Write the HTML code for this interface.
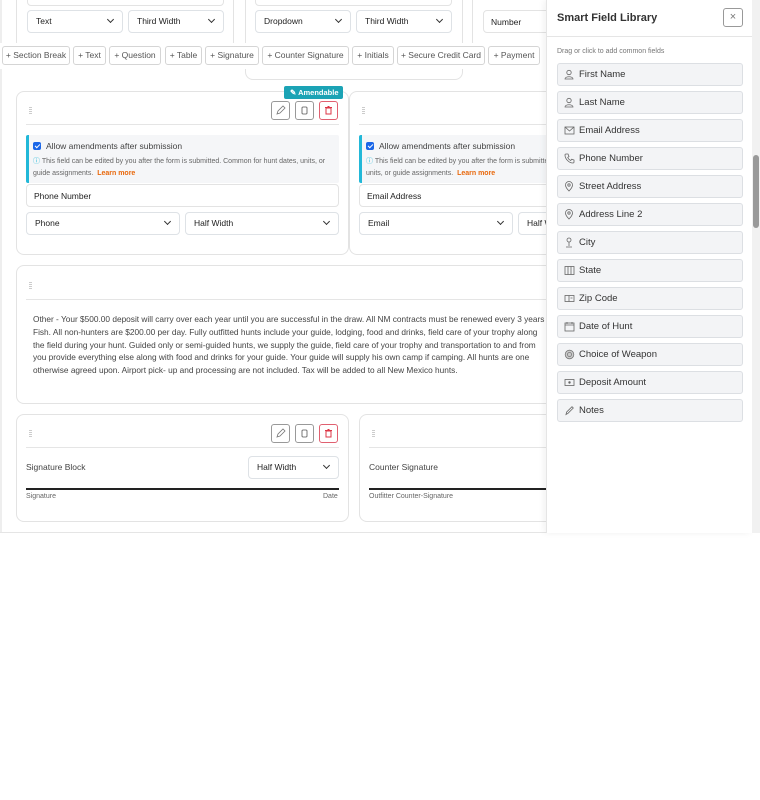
<!DOCTYPE html>
<html><head><style>
*{box-sizing:border-box;margin:0;padding:0}
body{width:760px;height:800px;background:#fff;font-family:"Liberation Sans",sans-serif;color:#333;position:relative;overflow:hidden}
.a{position:absolute}
.main{position:absolute;left:0;top:0;width:546px;height:533px;background:#fff;border-bottom:1px solid #e5e5e5;overflow:hidden}
.card{position:absolute;background:#fff;border:1px solid #e3e3e3;border-radius:8px}
.sel{position:absolute;height:23px;border:1px solid #dee2e6;border-radius:4px;font-size:8.5px;line-height:21px;padding-left:8px;background:#fff;color:#222}
.sel:after{content:"";position:absolute;right:9px;top:6px;width:4px;height:4px;border-right:1px solid #333;border-bottom:1px solid #333;transform:rotate(45deg)}
.inp{position:absolute;height:24px;border:1px solid #e3e3e3;border-radius:4px;font-size:8.5px;line-height:22px;padding-left:7px;background:#fff;color:#222}
.tb{position:absolute;top:46px;height:19px;border:1px solid #d5d5d5;border-radius:3px;font-size:8.5px;line-height:17px;text-align:center;background:#fff;color:#555;white-space:nowrap;overflow:hidden}
.grip{position:absolute;width:3px;height:7px;background:repeating-linear-gradient(#ccc 0 1px,transparent 1px 2px)}
.hr{position:absolute;height:1px;background:#e5e5e5}
.ib{position:absolute;width:19px;height:19px;border:1px solid #999;border-radius:3px;background:#fff}
.ib.r{border-color:#e06070}
.amend{position:absolute;background:#f5f6f8;border-left:3px solid #22b8d8;border-radius:2px}
.chk{position:absolute;width:8px;height:8px;background:#1a66e8;border-radius:2px}
.chk:after{content:"";position:absolute;left:2.5px;top:1px;width:2px;height:4px;border-right:1px solid #fff;border-bottom:1px solid #fff;transform:rotate(45deg)}
.t85{font-size:8.5px;color:#444}
.small{font-size:7px;color:#666;line-height:12px}
.lm{color:#e8680c;font-weight:bold}
.panel{position:absolute;left:546px;top:0;width:206px;height:533px;background:#fff;border-left:1px solid #e5e5e5;box-shadow:-2px 0 6px rgba(0,0,0,.06)}
.pi{position:absolute;left:10px;width:186px;height:23px;background:#f3f4f6;border:1px solid #dcdfe3;border-radius:3px;font-size:9.5px;line-height:21px;padding-left:21px;color:#333}
.pi svg{position:absolute;left:6px;top:5px}
</style></head><body>
<div class="main">
  <div class="a" style="left:0;top:0;width:2px;height:533px;background:#eee"></div>
  <div class="card" style="left:16px;top:-20px;width:218px;height:70px"></div>
  <div class="card" style="left:245px;top:-20px;width:218px;height:100px"></div>
  <div class="card" style="left:472px;top:-20px;width:100px;height:70px"></div>
  <div class="inp" style="left:27px;top:-18px;width:197px"></div>
  <div class="inp" style="left:255px;top:-18px;width:197px"></div>
  <div class="sel" style="left:27px;top:10px;width:96px">Text</div>
  <div class="sel" style="left:128px;top:10px;width:96px">Third Width</div>
  <div class="sel" style="left:255px;top:10px;width:96px">Dropdown</div>
  <div class="sel" style="left:356px;top:10px;width:96px">Third Width</div>
  <div class="inp" style="left:483px;top:10px;width:80px;height:23px">Number</div>
  <div class="a" style="left:0;top:43px;width:546px;height:26px;background:#fff"></div>
  <div class="tb" style="left:2px;width:68px">+ Section Break</div>
  <div class="tb" style="left:73px;width:33px">+ Text</div>
  <div class="tb" style="left:109px;width:52px">+ Question</div>
  <div class="tb" style="left:165px;width:37px">+ Table</div>
  <div class="tb" style="left:205px;width:54px">+ Signature</div>
  <div class="tb" style="left:262px;width:87px">+ Counter Signature</div>
  <div class="tb" style="left:352px;width:42px">+ Initials</div>
  <div class="tb" style="left:397px;width:88px">+ Secure Credit Card</div>
  <div class="tb" style="left:488px;width:52px">+ Payment</div>

  <div class="card" style="left:16px;top:91px;width:333px;height:164px"></div>
  <div class="a" style="left:284px;top:86px;width:59px;height:13px;background:#1ba3b5;border-radius:2px;color:#fff;font-size:7.5px;font-weight:bold;line-height:13px;padding-left:6px">✎ Amendable</div>
  <div class="grip" style="left:29px;top:107px"></div>
  <div class="ib" style="left:271px;top:101px"><svg width="17" height="17" viewBox="0 0 17 17"><path d="M5 12l1-3 5-5 2 2-5 5z" fill="none" stroke="#777" stroke-width=".8"/></svg></div>
  <div class="ib" style="left:295px;top:101px"><svg width="17" height="17" viewBox="0 0 17 17"><rect x="6" y="5" width="5" height="7" rx="1" fill="none" stroke="#555" stroke-width=".8"/></svg></div>
  <div class="ib r" style="left:319px;top:101px"><svg width="17" height="17" viewBox="0 0 17 17"><path d="M6 6h5v6H6zM5 5.5h7M7.5 4.5h2" fill="none" stroke="#dc3545" stroke-width="1"/></svg></div>
  <div class="hr" style="left:26px;top:124px;width:313px"></div>
  <div class="amend" style="left:26px;top:135px;width:313px;height:48px"></div>
  <div class="chk" style="left:33px;top:142px"></div>
  <div class="a t85" style="left:46px;top:141px">Allow amendments after submission</div>
  <div class="a small" style="left:33px;top:156px;width:300px"><span style="color:#22b8d8">ⓘ</span> This field can be edited by you after the form is submitted. Common for hunt dates, units, or guide assignments. &nbsp;<span class="lm">Learn more</span></div>
  <div class="inp" style="left:26px;top:184px;width:313px;height:23px">Phone Number</div>
  <div class="sel" style="left:26px;top:212px;width:154px">Phone</div>
  <div class="sel" style="left:185px;top:212px;width:154px">Half Width</div>

  <div class="card" style="left:349px;top:91px;width:220px;height:164px"></div>
  <div class="grip" style="left:362px;top:107px"></div>
  <div class="hr" style="left:359px;top:124px;width:200px"></div>
  <div class="amend" style="left:359px;top:135px;width:200px;height:48px"></div>
  <div class="chk" style="left:366px;top:142px"></div>
  <div class="a t85" style="left:379px;top:141px">Allow amendments after submission</div>
  <div class="a small" style="left:366px;top:156px;width:300px"><span style="color:#22b8d8">ⓘ</span> This field can be edited by you after the form is submitted.<br>units, or guide assignments. &nbsp;<span class="lm">Learn more</span></div>
  <div class="inp" style="left:359px;top:184px;width:200px;height:23px">Email Address</div>
  <div class="sel" style="left:359px;top:212px;width:154px">Email</div>
  <div class="sel" style="left:518px;top:212px;width:154px">Half Width</div>

  <div class="card" style="left:16px;top:265px;width:560px;height:139px"></div>
  <div class="grip" style="left:29px;top:282px"></div>
  <div class="hr" style="left:26px;top:299px;width:530px"></div>
  <div class="a" style="left:33px;top:313px;width:540px;font-size:8.3px;line-height:12.8px;color:#444;white-space:nowrap">Other - Your $500.00 deposit will carry over each year until you are successful in the draw. All NM contracts must be renewed every 3 years<br>Fish. All non-hunters are $200.00 per day. Fully outfitted hunts include your guide, lodging, food and drinks, field care of your trophy along<br>the field during your hunt. Guided only or semi-guided hunts, we supply the guide, field care of your trophy and transportation to and from<br>you provide everything else along with food and drinks for your guide. Your guide will supply his own camp if camping. All hunts are one<br>otherwise agreed upon. Airport pick- up and processing are not included. Tax will be added to all New Mexico hunts.</div>

  <div class="card" style="left:16px;top:414px;width:333px;height:108px"></div>
  <div class="grip" style="left:29px;top:430px"></div>
  <div class="ib" style="left:271px;top:424px"><svg width="17" height="17" viewBox="0 0 17 17"><path d="M5 12l1-3 5-5 2 2-5 5z" fill="none" stroke="#777" stroke-width=".8"/></svg></div>
  <div class="ib" style="left:295px;top:424px"><svg width="17" height="17" viewBox="0 0 17 17"><rect x="6" y="5" width="5" height="7" rx="1" fill="none" stroke="#555" stroke-width=".8"/></svg></div>
  <div class="ib r" style="left:319px;top:424px"><svg width="17" height="17" viewBox="0 0 17 17"><path d="M6 6h5v6H6zM5 5.5h7M7.5 4.5h2" fill="none" stroke="#dc3545" stroke-width="1"/></svg></div>
  <div class="hr" style="left:26px;top:447px;width:313px"></div>
  <div class="a t85" style="left:26px;top:462px">Signature Block</div>
  <div class="sel" style="left:248px;top:456px;width:91px">Half Width</div>
  <div class="a" style="left:26px;top:488px;width:313px;height:2px;background:#222"></div>
  <div class="a" style="left:26px;top:493px;font-size:7px;color:#666">Signature</div>
  <div class="a" style="left:323px;top:493px;font-size:7px;color:#666">Date</div>
  <div class="card" style="left:359px;top:414px;width:220px;height:108px"></div>
  <div class="grip" style="left:372px;top:430px"></div>
  <div class="hr" style="left:369px;top:447px;width:200px"></div>
  <div class="a t85" style="left:369px;top:462px">Counter Signature</div>
  <div class="a" style="left:369px;top:488px;width:200px;height:2px;background:#222"></div>
  <div class="a" style="left:369px;top:493px;font-size:7px;color:#666">Outfitter Counter-Signature</div>
  <div class="card" style="left:16px;top:532px;width:560px;height:40px"></div>
</div>

<div class="panel">
  <div class="a" style="left:10px;top:12px;font-size:11px;font-weight:bold;color:#333">Smart Field Library</div>
  <div class="a" style="left:176px;top:8px;width:20px;height:19px;border:1px solid #999;border-radius:3px;text-align:center;line-height:17px;font-size:11px;color:#777">×</div>
  <div class="a" style="left:0;top:36px;width:206px;height:1px;background:#e5e5e5"></div>
  <div class="a" style="left:10px;top:48px;font-size:7px;color:#777">Drag or click to add common fields</div>
  <div class="pi" style="top:63px"><svg width="10" height="11"><circle cx="5" cy="3.5" r="2.2" fill="none" stroke="#666" stroke-width=".8"/><path d="M1 10c0-3 8-3 8 0z" fill="none" stroke="#666" stroke-width=".8"/></svg>First Name</div>
  <div class="pi" style="top:91px"><svg width="10" height="11"><circle cx="5" cy="3.5" r="2.2" fill="none" stroke="#666" stroke-width=".8"/><path d="M1 10c0-3 8-3 8 0z" fill="none" stroke="#666" stroke-width=".8"/></svg>Last Name</div>
  <div class="pi" style="top:119px"><svg width="11" height="11"><rect x="1" y="2" width="9" height="7" fill="none" stroke="#666" stroke-width=".8"/><path d="M1 2l4.5 4L10 2" fill="none" stroke="#666" stroke-width=".8"/></svg>Email Address</div>
  <div class="pi" style="top:147px"><svg width="11" height="11"><path d="M2 1l2 0 1 2.5-1.3 1a6 6 0 0 0 3 3l1-1.3L10 7v2a1 1 0 0 1-1 1C5 10 1 6 1 2a1 1 0 0 1 1-1z" fill="none" stroke="#666" stroke-width=".8"/></svg>Phone Number</div>
  <div class="pi" style="top:175px"><svg width="10" height="11"><path d="M5 10C2 7 1.5 5.5 1.5 4a3.5 3.5 0 0 1 7 0C8.5 5.5 8 7 5 10z" fill="none" stroke="#666" stroke-width=".8"/><circle cx="5" cy="4" r="1.2" fill="none" stroke="#666" stroke-width=".8"/></svg>Street Address</div>
  <div class="pi" style="top:203px"><svg width="10" height="11"><path d="M5 10C2 7 1.5 5.5 1.5 4a3.5 3.5 0 0 1 7 0C8.5 5.5 8 7 5 10z" fill="none" stroke="#666" stroke-width=".8"/><circle cx="5" cy="4" r="1.2" fill="none" stroke="#666" stroke-width=".8"/></svg>Address Line 2</div>
  <div class="pi" style="top:231px"><svg width="10" height="11"><circle cx="5" cy="3" r="2" fill="none" stroke="#666" stroke-width=".8"/><path d="M5 5v4M2 10h6" stroke="#666" stroke-width=".8"/></svg>City</div>
  <div class="pi" style="top:259px"><svg width="11" height="11"><rect x="1" y="1.5" width="9" height="8" fill="none" stroke="#666" stroke-width=".8"/><path d="M4 1.5v8M7 1.5v8" stroke="#666" stroke-width=".8"/></svg>State</div>
  <div class="pi" style="top:287px"><svg width="11" height="11"><rect x="1" y="2.5" width="9" height="6" fill="none" stroke="#666" stroke-width=".8"/><path d="M5 2.5v6M6.5 5h2" stroke="#666" stroke-width=".8"/></svg>Zip Code</div>
  <div class="pi" style="top:315px"><svg width="11" height="11"><rect x="1" y="2" width="9" height="8" fill="none" stroke="#666" stroke-width=".8"/><path d="M1 4h9M3 1v2M8 1v2" stroke="#666" stroke-width=".8"/></svg>Date of Hunt</div>
  <div class="pi" style="top:343px"><svg width="11" height="11"><circle cx="5.5" cy="5.5" r="4.3" fill="#ccc" stroke="#777" stroke-width=".8"/><circle cx="5.5" cy="5.5" r="2" fill="none" stroke="#777" stroke-width=".8"/></svg>Choice of Weapon</div>
  <div class="pi" style="top:371px"><svg width="11" height="11"><rect x="1" y="2.5" width="9" height="6" fill="none" stroke="#666" stroke-width=".8"/><circle cx="5.5" cy="5.5" r="1.2" fill="#666"/></svg>Deposit Amount</div>
  <div class="pi" style="top:399px"><svg width="11" height="11"><path d="M2 9.5l.7-2.5L8 1.7 9.3 3 4 8.3z" fill="none" stroke="#666" stroke-width=".8"/></svg>Notes</div>
</div>
<div class="a" style="left:752px;top:0;width:8px;height:533px;background:#f1f1f1"></div>
<div class="a" style="left:753px;top:155px;width:6px;height:73px;background:#999;border-radius:3px"></div>
</body></html>
